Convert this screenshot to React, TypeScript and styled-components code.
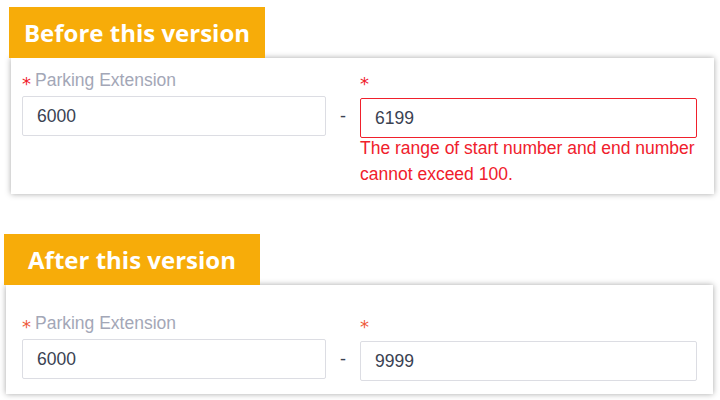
import React from 'react'
import styled, { createGlobalStyle } from 'styled-components'

const GlobalStyle = createGlobalStyle`
  html, body {
    margin: 0;
    padding: 0;
    background: #ffffff;
    font-family: 'Liberation Sans', Arial, sans-serif;
  }
`

const Page = styled.main`
  width: 720px;
  height: 400px;
  overflow: hidden;
  display: flex;
  flex-direction: column;
`

const Section = styled.section<{ $top: number; $left: number }>`
  display: flex;
  flex-direction: column;
  align-items: flex-start;
  margin-top: ${(p) => p.$top}px;
  padding-left: ${(p) => p.$left}px;
`

const Badge = styled.div`
  width: 256px;
  height: 51px;
  display: flex;
  align-items: center;
  justify-content: center;
  background: #f7ac09;
  color: #ffffff;
  font-family: 'Open Sans', 'Noto Sans', sans-serif;
  font-weight: 700;
  font-size: 24px;
  position: relative;
  z-index: 1;
`

type CardProps = {
  $width: number
  $shift: number
  $padTop: number
  $padBottom: number
  $padLeft: number
}

const Card = styled.div<CardProps>`
  box-sizing: border-box;
  width: ${(p) => p.$width}px;
  margin-left: ${(p) => p.$shift}px;
  padding: ${(p) => p.$padTop}px 0 ${(p) => p.$padBottom}px ${(p) => p.$padLeft}px;
  background: #ffffff;
  box-shadow: 0 0 6px rgba(0, 0, 0, 0.35);
  display: grid;
  grid-template-columns: 304px 34px 337px;
  align-items: start;
`

const Field = styled.div`
  display: flex;
  flex-direction: column;
`

const Label = styled.div`
  height: 24px;
  display: flex;
  align-items: center;
  font-size: 17.5px;
  color: #a3a7b7;
  margin-bottom: 4px;
`

const Star = styled.span<{ $tone: string }>`
  display: inline-block;
  color: ${(p) => p.$tone};
  margin-right: 4px;
  padding-top: 8px;
  font-family: 'DejaVu Sans', sans-serif;
  font-size: 18px;
  line-height: 18px;
`

const Input = styled.div<{ $invalid?: boolean; $lower?: boolean }>`
  box-sizing: border-box;
  height: 40px;
  margin-top: ${(p) => (p.$lower ? 2 : 0)}px;
  border: 1px solid ${(p) => (p.$invalid ? '#f0202c' : '#dcdde3')};
  border-radius: 2px;
  padding: 0 14px;
  display: flex;
  align-items: center;
  font-size: 17.5px;
  color: #3a4252;
`

const Dash = styled.div`
  height: 40px;
  margin-top: 28px;
  display: flex;
  align-items: center;
  justify-content: center;
  font-size: 18px;
  color: #3a4252;
`

const ErrorText = styled.div`
  margin-top: -3px;
  font-size: 17.5px;
  line-height: 26px;
  color: #f0202c;
`

type RangeProps = {
  end: string
  error?: string
  tone: string
}

const RangeRow: React.FC<RangeProps> = ({ end, error, tone }) => (
  <>
    <Field>
      <Label>
        <Star $tone={tone}>*</Star>Parking Extension
      </Label>
      <Input>6000</Input>
    </Field>
    <Dash>-</Dash>
    <Field>
      <Label>
        <Star $tone={tone}>*</Star>
      </Label>
      <Input $invalid={!!error} $lower>
        {end}
      </Input>
      {error && <ErrorText>{error}</ErrorText>}
    </Field>
  </>
)

export default function App() {
  return (
    <Page>
      <GlobalStyle />
      <Section $top={7} $left={9}>
        <Badge>Before this version</Badge>
        <Card $width={703} $shift={2} $padTop={10} $padBottom={7} $padLeft={11}>
          <RangeRow
            end="6199"
            tone="#f0202c"
            error="The range of start number and end number cannot exceed 100."
          />
        </Card>
      </Section>
      <Section $top={40} $left={4}>
        <Badge>After this version</Badge>
        <Card $width={707} $shift={2} $padTop={26} $padBottom={13} $padLeft={16}>
          <RangeRow end="9999" tone="#ee5a3a" />
        </Card>
      </Section>
    </Page>
  )
}
